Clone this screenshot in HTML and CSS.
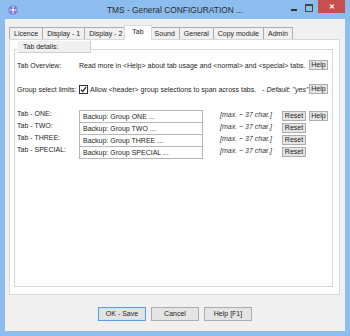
FILE: index.html
```html
<!DOCTYPE html>
<html>
<head>
<meta charset="UTF-8">
  <title>TMS - General CONFIGURATION ...</title>
  <link rel="stylesheet" href="styles.css">
</head>
<body>
  <div class="window">
    <div class="titlebar">
      <div class="title-left">
        <svg class="app-icon" width="10" height="10" viewBox="0 0 10 10">
          <circle cx="5" cy="5" r="4.6" fill="#7a74d6"/>
          <circle cx="5" cy="2.4" r="1.3" fill="#b9b4f2"/>
          <circle cx="5" cy="7.6" r="1.3" fill="#b9b4f2"/>
          <circle cx="2.4" cy="5" r="1.3" fill="#b9b4f2"/>
          <circle cx="7.6" cy="5" r="1.3" fill="#b9b4f2"/>
          <circle cx="5" cy="5" r="1.2" fill="#fff"/>
        </svg>
      </div>
      <div class="title">TMS - General CONFIGURATION ...</div>
      <div class="controls">
        <span class="ctl-min"></span>
        <span class="ctl-max"></span>
        <span class="ctl-close">&#x2715;</span>
      </div>
    </div>

    <div class="client">
      <div class="tab-strip">
        <div class="tab">Licence</div>
        <div class="tab">Display - 1</div>
        <div class="tab">Display - 2</div>
        <div class="tab active">Tab</div>
        <div class="tab">Sound</div>
        <div class="tab">General</div>
        <div class="tab">Copy module</div>
        <div class="tab">Admin</div>
      </div>

      <div class="tab-panel">
        <div class="legend">Tab details:</div>
        <div class="group">
          <div class="row row-overview">
            <div class="label">Tab Overview:</div>
            <div class="text">Read more in &lt;Help&gt; about tab usage and &lt;normal&gt; and &lt;special&gt; tabs.</div>
            <button class="btn btn-help">Help</button>
          </div>

          <div class="row row-limits">
            <div class="label">Group select limits:</div>
            <span class="checkbox">
              <svg width="7" height="7" viewBox="0 0 7 7"><path d="M1 3.6 L2.8 5.4 L6 1.2" fill="none" stroke="#222" stroke-width="1.3"/></svg>
            </span>
            <div class="text">Allow &lt;header&gt; group selections to span across tabs.</div>
            <div class="default">- <i>Default: "yes"</i></div>
            <button class="btn btn-help">Help</button>
          </div>

          <div class="tab-names">
            <div class="row row-name">
              <div class="label">Tab - ONE:</div>
              <div class="input">Backup: Group ONE ...</div>
              <div class="hint">[max. ~ 37 char.]</div>
              <button class="btn btn-reset">Reset</button>
              <button class="btn btn-help">Help</button>
            </div>
            <div class="row row-name">
              <div class="label">Tab - TWO:</div>
              <div class="input">Backup: Group TWO ...</div>
              <div class="hint">[max. ~ 37 char.]</div>
              <button class="btn btn-reset">Reset</button>
            </div>
            <div class="row row-name">
              <div class="label">Tab - THREE:</div>
              <div class="input">Backup: Group THREE ...</div>
              <div class="hint">[max. ~ 37 char.]</div>
              <button class="btn btn-reset">Reset</button>
            </div>
            <div class="row row-name">
              <div class="label">Tab - SPECIAL:</div>
              <div class="input">Backup: Group SPECIAL ...</div>
              <div class="hint">[max. ~ 37 char.]</div>
              <button class="btn btn-reset">Reset</button>
            </div>
          </div>
        </div>
      </div>

      <div class="dialog-buttons">
        <button class="btn btn-dialog btn-default">OK - Save</button>
        <button class="btn btn-dialog">Cancel</button>
        <button class="btn btn-dialog">Help [F1]</button>
      </div>
    </div>
  </div>
</body>
</html>
```

FILE: styles.css
```css
body {
  margin: 0;
  width: 350px;
  height: 336px;
  overflow: hidden;
  font-family: "Liberation Sans", Arial, sans-serif;
  font-size: 7px;
  color: #1e1e1e;
}

.window {
  display: flex;
  flex-direction: column;
  width: 350px;
  height: 336px;
  background-color: #8dbdee;
  padding: 0 5px 5px 5px;
  box-sizing: border-box;
}

/* title bar */
.titlebar {
  display: flex;
  height: 19px;
  margin: 0 -5px;
}

.title-left {
  width: 60px;
  padding: 5px 0 0 8px;
  box-sizing: border-box;
}

.app-icon {
  display: block;
}

.title {
  flex: 1;
  text-align: center;
  font-size: 8.4px;
  line-height: 20px;
  color: #2b2b2b;
}

.controls {
  width: 60px;
  display: flex;
  align-items: flex-start;
  justify-content: flex-end;
  padding-right: 5px;
  box-sizing: border-box;
}

.ctl-min {
  width: 6px;
  height: 2px;
  background-color: #333;
  margin: 9px 8px 0 0;
}

.ctl-max {
  width: 6px;
  height: 5px;
  border: 1px solid #444;
  border-top-width: 2px;
  margin: 4px 5px 0 0;
}

.ctl-close {
  width: 27px;
  height: 13px;
  background-color: #c7504f;
  color: #fff;
  font-size: 7px;
  font-weight: bold;
  text-align: center;
  line-height: 13px;
}

/* client area */
.client {
  flex: 1;
  display: flex;
  flex-direction: column;
  background-color: #f0f0f0;
  padding: 6px 5px 10px 4px;
}

.tab-strip {
  display: flex;
  align-items: flex-end;
  height: 14px;
  position: relative;
  z-index: 1;
}

.tab {
  height: 12px;
  line-height: 12px;
  padding: 0 4px;
  border: 1px solid #adadad;
  border-bottom: none;
  margin-right: -1px;
  background-color: #f0f0f0;
  white-space: nowrap;
  box-sizing: border-box;
}

.tab.active {
  height: 15px;
  line-height: 11px;
  margin: 0 -2px -1px -2px;
  padding: 0 7px;
  background-color: #fff;
  border-color: #d9d9d9;
  position: relative;
}

.tab-panel {
  flex: 1;
  display: flex;
  flex-direction: column;
  background-color: #fff;
  border: 1px solid #d9d9d9;
  padding: 0 6px 7px 4px;
}

.legend {
  width: 74px;
  height: 13px;
  line-height: 12px;
  margin: 0 0 -4px 3px;
  padding-left: 5px;
  box-sizing: border-box;
  background-color: #f0f0f0;
  border: 1px solid #cfcfcf;
  border-top-color: #fff;
  border-left-color: #fff;
  position: relative;
}

.group {
  flex: 1;
  border: 1px solid #d5d5d5;
  padding: 9px 4px 0 2px;
}

.row {
  display: flex;
  align-items: center;
  height: 12px;
}

.row-limits {
  margin-top: 12px;
}

.label {
  width: 62px;
  flex-shrink: 0;
  white-space: nowrap;
}

.row .text {
  white-space: nowrap;
}

.row-overview .text {
  flex: 1;
}

.checkbox {
  width: 7px;
  height: 7px;
  border: 1px solid #333;
  background-color: #fff;
  margin-right: 2px;
  display: flex;
}

.default {
  flex: 1;
  margin-left: 6px;
  white-space: nowrap;
}

.tab-names {
  margin-top: 15px;
}

.row-name {
  align-items: flex-start;
}

.input {
  width: 124px;
  height: 13px;
  line-height: 11px;
  border: 1px solid #b5b5b5;
  padding-left: 3px;
  box-sizing: border-box;
  background-color: #fff;
  white-space: nowrap;
}

.hint {
  margin: 1px 0 0 17px;
  width: 62px;
  font-style: italic;
  color: #333;
  white-space: nowrap;
}

/* buttons */
.btn {
  font-family: "Liberation Sans", Arial, sans-serif;
  font-size: 7px;
  color: #1e1e1e;
  background-color: #e4e4e4;
  border: 1px solid #adadad;
  border-radius: 0;
  padding: 0;
  height: 10px;
  line-height: 8px;
  cursor: pointer;
}

.btn-help {
  width: 19px;
  margin-left: auto;
}

.btn-reset {
  width: 24px;
  margin-top: 1px;
}

.row-name .btn-help {
  margin: 1px 0 0 3px;
}

.dialog-buttons {
  display: flex;
  justify-content: center;
  gap: 5px;
  margin-top: 12px;
  padding-left: 1px;
}

.btn-dialog {
  width: 48px;
  height: 14px;
  line-height: 12px;
}

.btn-default {
  border-color: #5a9ee6;
  box-shadow: inset 0 0 0 1px #cde3f9;
}
```
